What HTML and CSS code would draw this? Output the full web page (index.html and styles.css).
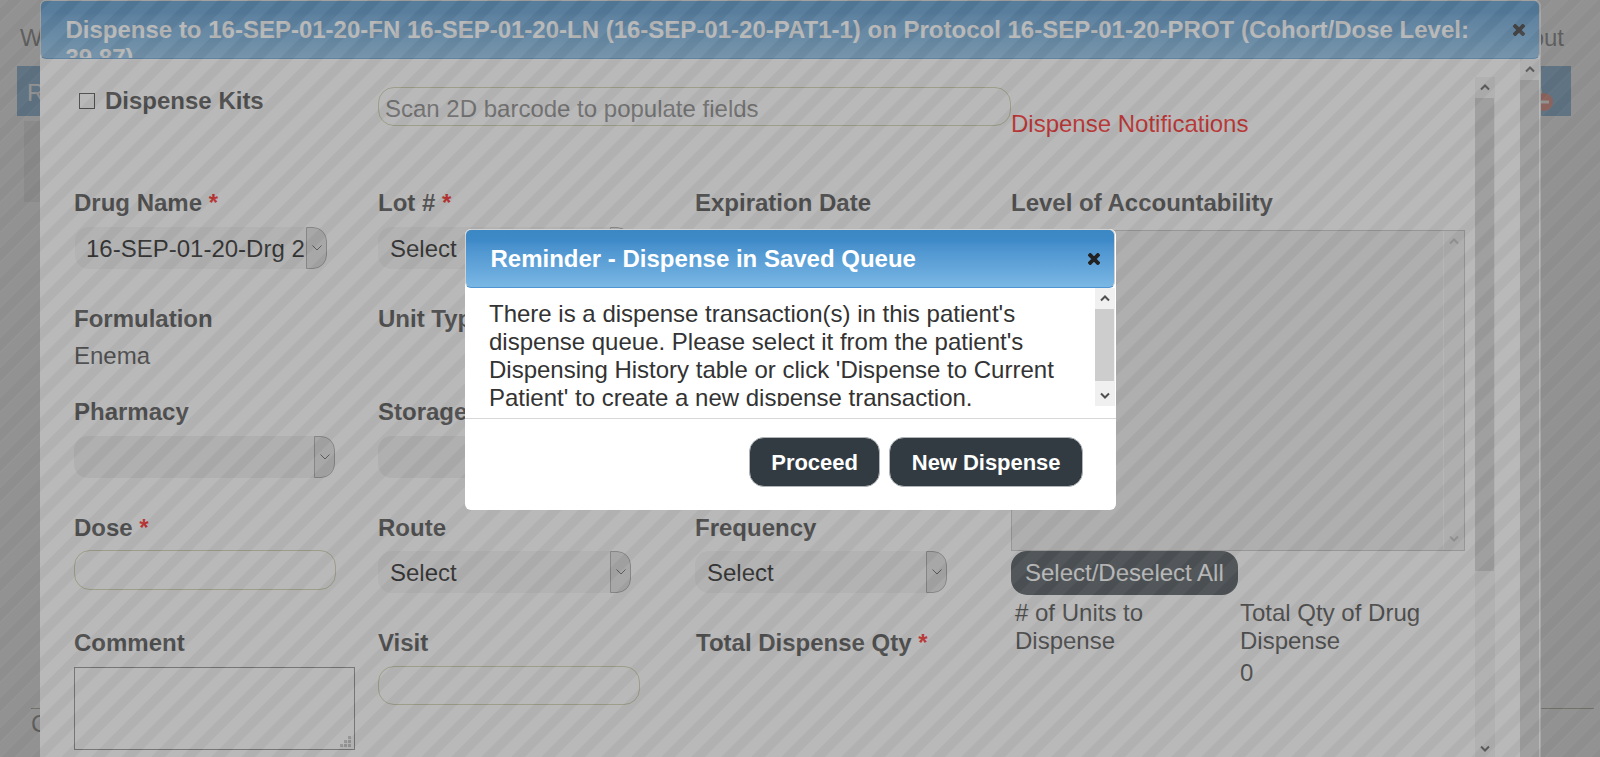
FILE: index.html
```html
<!DOCTYPE html>
<html lang="en">
<head>
<meta charset="utf-8">
<title>Dispense</title>
<link rel="stylesheet" href="styles.css">
</head>
<body>
<svg class="defs" width="0" height="0">
  <symbol id="up" viewBox="0 0 10 8"><path d="M1 6.5 5 2.5 9 6.5" fill="none" stroke="currentColor" stroke-width="2"/></symbol>
  <symbol id="down" viewBox="0 0 10 8"><path d="M1 1.5 5 5.5 9 1.5" fill="none" stroke="currentColor" stroke-width="2"/></symbol>
  <symbol id="caret" viewBox="0 0 10 6"><path d="M.5 .5 5 5 9.500 .5" fill="none" stroke="currentColor" stroke-width="1"/></symbol>
  <symbol id="close" viewBox="0 0 12 12"><path d="M2.200 2.200 9.800 9.800M9.800 2.200 2.200 9.800" fill="none" stroke="currentColor" stroke-width="3.900" stroke-linecap="square"/></symbol>
</svg>

<div class="page">
  <div class="page-top"><span>W</span><span>Logout</span></div>
  <div class="nav"><span>R</span>
    <svg class="nav-icon" width="34" height="40" viewBox="0 0 34 40"><path d="M15 2h4l4 24H8z" fill="#eee"/><circle cx="24" cy="29" r="9" fill="#e0452f"/><path d="M19 29h10" stroke="#fff" stroke-width="3"/></svg>
  </div>
  <div class="panel"></div>
  <div class="footer">C</div>
</div>
<div class="overlay overlay-back"></div>

<div class="dialog">
  <div class="titlebar"><h1 class="title">Dispense to 16-SEP-01-20-FN 16-SEP-01-20-LN (16-SEP-01-20-PAT1-1) on Protocol 16-SEP-01-20-PROT (Cohort/Dose Level: 39.87)</h1><svg class="close" width="12" height="12"><use href="#close"/></svg></div>
  <div class="dialog-body">
    <div class="form">
      <div class="fields">
        <div class="kits"><i class="checkbox"></i><b>Dispense Kits</b></div>
        <div class="scan">Scan 2D barcode to populate fields</div>

        <div class="cell"><b>Drug Name <em>*</em></b><div class="select nudge"><span>16-SEP-01-20-Drg 2</span><i><svg width="10" height="6"><use href="#caret"/></svg></i></div></div>
        <div class="cell"><b>Lot # <em>*</em></b><div class="select"><span>Select</span><i><svg width="10" height="6"><use href="#caret"/></svg></i></div></div>
        <div class="cell"><b>Expiration Date</b></div>

        <div class="cell tight"><b>Formulation</b><span>Enema</span></div>
        <div class="cell"><b>Unit Type</b></div>
        <div class="cell"></div>

        <div class="cell"><b>Pharmacy</b><div class="select wide"><span></span><i><svg width="10" height="6"><use href="#caret"/></svg></i></div></div>
        <div class="cell"><b>Storage</b><div class="select disabled"><span></span><i><svg width="10" height="6"><use href="#caret"/></svg></i></div></div>
        <div class="cell"></div>

        <div class="cell dose"><b>Dose <em>*</em></b><div class="input"></div></div>
        <div class="cell route"><b>Route</b><div class="select"><span>Select</span><i><svg width="10" height="6"><use href="#caret"/></svg></i></div></div>
        <div class="cell route"><b>Frequency</b><div class="select narrow"><span>Select</span><i><svg width="10" height="6"><use href="#caret"/></svg></i></div></div>

        <div class="cell"><b>Comment</b><div class="textarea"><svg width="11" height="11" viewBox="0 0 11 11"><path d="M8 0h3v3H8zM4 4h3v3H4zM8 4h3v3H8zM0 8h3v3H0zM4 8h3v3H4zM8 8h3v3H8z" fill="#bbb"/></svg></div></div>
        <div class="cell visit"><b>Visit</b><div class="input"></div></div>
        <div class="cell qty"><b>Total Dispense Qty <em>*</em></b></div>
      </div>
      <div class="side">
        <div class="notice">Dispense Notifications</div>
        <b>Level of Accountability</b>
        <div class="listbox"><div class="list-scroll"><svg width="10" height="8"><use href="#up"/></svg><svg width="10" height="8"><use href="#down"/></svg></div></div>
        <div class="select-all">Select/Deselect All</div>
        <div class="totals"><span># of Units to Dispense</span><span>Total Qty of Drug Dispense</span><span></span><span>0</span></div>
      </div>
    </div>
    <div class="scrollbar inner"><svg width="10" height="8"><use href="#up"/></svg><div class="thumb"></div><svg width="10" height="8"><use href="#down"/></svg></div>
    <div class="scrollbar outer"><svg width="10" height="8"><use href="#up"/></svg><div class="thumb"></div></div>
  </div>
</div>
<div class="overlay"></div>

<div class="reminder">
  <div class="titlebar"><h2 class="title">Reminder - Dispense in Saved Queue</h2><svg class="close" width="12" height="12"><use href="#close"/></svg></div>
  <div class="message">
    <p>There is a dispense transaction(s) in this patient's dispense queue. Please select it from the patient's Dispensing History table or click 'Dispense to Current Patient' to create a new dispense transaction.</p>
    <div class="scrollbar small"><svg width="10" height="8"><use href="#up"/></svg><div class="thumb"></div><svg width="10" height="8"><use href="#down"/></svg></div>
  </div>
  <div class="buttons"><div class="button">Proceed</div><div class="button">New Dispense</div></div>
</div>
</body>
</html>
```

FILE: styles.css
```css
* { box-sizing: border-box; }
body { margin: 0; width: 1600px; height: 757px; overflow: hidden; position: relative; background: #fff; color: #333; font: 24px/28px "Liberation Sans", Arial, sans-serif; }
.defs { position: absolute; }
svg { display: block; flex: none; }
b { font-weight: bold; }
em { font-style: normal; color: #f00; }

.page { height: 757px; padding: 24px 0 0; background: #fff; }
.page-top { display: flex; justify-content: space-between; padding: 0 36px 0 20px; height: 42px; }
.nav { width: 1554px; height: 50px; margin-left: 17px; padding: 13px 15px 0 10px; display: flex; justify-content: space-between; background: #3a84c4; color: #fff; }
.nav-icon { margin: -6px 2px 0 0; }
.panel { width: 1480px; height: 81px; margin: 5px 0 0 24px; background: #e2e2e2; }
.footer { width: 1563px; margin: 506px 0 0 31px; padding-top: 1px; border-top: 1px solid #808060; }

.overlay { position: absolute; inset: 0; opacity: .5; background: repeating-linear-gradient(135deg, #737373 0 5.3px, #636363 6.3px 15px, #737373 16px 21.213px); }
.overlay-back { background: repeating-linear-gradient(135deg, #636363 0 4.500px, #737373 5.500px 16px, #636363 17px 21.213px); }

.titlebar { display: flex; justify-content: space-between; height: 58px; padding: 15px 14px 0 24.500px; border: 1px solid #4f95d2; border-color: #d0d0d0 #d0d0d0 #4f95d2; border-radius: 6px; background: linear-gradient(#3b88c4 0, #3f8ac8 20%, #4a92ce 28%, #7ab7e4 100%); color: #fff; overflow: hidden; }
.title { margin: 0; font-size: 24px; line-height: 28px; font-weight: bold; white-space: normal; }
.close { color: #222; margin-top: 8px; }

.dialog { position: absolute; left: 40px; top: 0; width: 1501px; height: 757px; background: #fff; border-right: 1px solid #ddd; border-radius: 6px 6px 0 0; overflow: hidden; }
.dialog .titlebar { height: 59px; width: 1500px; padding-right: 14px; }
.dialog .title { width: 1420px; }
.dialog-body { display: flex; height: 698px; }
.form { width: 1435px; display: flex; padding: 28px 0 0 34px; }
.fields { width: 937px; display: grid; grid-template-columns: 304px 317px 316px; grid-template-rows: 102px 116px 93px 116px 115px 130px; }
.kits { display: flex; gap: 10px; padding-left: 5px; }
.checkbox { width: 16px; height: 16px; margin-top: 6px; border: 1px solid #333; }
.scan { grid-column: 2 / 4; width: 633px; height: 39px; padding: 7px 6px 0; border: 1px solid #c8c8a0; border-radius: 16px; color: #757575; line-height: 28px; }
.cell { display: flex; flex-direction: column; gap: 10px; }
.cell.tight, .cell.route { gap: 9px; }
.cell.dose { gap: 8px; }
.cell.visit { gap: 9px; }
.cell.qty { padding-left: 1px; }
.select { width: 253px; height: 42px; display: flex; border-radius: 14px; overflow: hidden; background: #f3f3f3; color: #000; }
.select.nudge { width: 252px; margin-left: 1px; }
.select.nudge span { padding-left: 11px; }
.select.narrow { width: 252px; }
.select.wide { width: 261px; }
.select.wide, .select.disabled { background: #ededed; }
.select span { flex: 1; min-width: 0; padding: 8px 0 0 12px; overflow: hidden; white-space: nowrap; }
.select i { width: 21px; border: 1px solid #999; border-radius: 0 14px 14px 0; background: #dcdcdc; display: flex; align-items: center; justify-content: center; color: #444; }
.input { width: 262px; height: 40px; border: 1px solid #c8c8a0; border-radius: 16px; }
.visit .input { height: 39px; }
.textarea { width: 281px; height: 83px; border: 1px solid #7a7a7a; display: flex; align-items: flex-end; justify-content: flex-end; padding: 2px 3px; }

.side { width: 454px; padding-top: 23px; display: flex; flex-direction: column; }
.notice { height: 79px; color: #f00; }
.listbox { height: 321px; margin-top: 13px; border: 1px solid #bbb; background: #ebebeb; display: flex; justify-content: flex-end; }
.list-scroll { width: 21px; border-left: 1px solid #fafafa; display: flex; flex-direction: column; align-items: center; justify-content: space-between; padding: 6px 1px 7px 0; color: #bbb; }
.select-all { width: 227px; height: 44px; padding: 8px 0 0 14px; border-radius: 16px; background: #323b42; color: #fff; white-space: nowrap; }
.totals { padding: 4px 0 0 4px; display: grid; grid-template-columns: 160px 220px; column-gap: 65px; row-gap: 4px; }

.scrollbar { display: flex; flex-direction: column; align-items: center; background: #f0f0f0; color: #505050; }
.thumb { width: 100%; background: #cdcdcd; }
.scrollbar.inner { width: 20px; margin-top: 18px; height: 680px; padding: 6px 1px 0 0; }
.inner .thumb { height: 473px; margin: 7px 0 174px; }
.scrollbar.outer { width: 19px; margin-left: 25px; padding-top: 6px; }
.outer .thumb { flex: 1; margin-top: 7px; }

.reminder { position: absolute; left: 465px; top: 229px; width: 651px; height: 281px; border-radius: 6px; background: #fff; overflow: hidden; }
.reminder .titlebar { width: 650px; height: 59px; border-color: #d0d0d0 #d0d0d0 #4f95d2; }
.message { height: 118px; display: flex; overflow: hidden; }
.message p { margin: 0; width: 630px; padding: 12px 30px 0 24px; }
.scrollbar.small { width: 20px; padding: 6px 1px 0 0; }
.small .thumb { height: 72px; margin: 7px 0 11px; }
.buttons { margin-top: 12px; height: 92px; border-top: 1px solid #d8d8d8; display: flex; justify-content: flex-end; gap: 9px; padding: 18px 33px 0 0; }
.button { height: 50px; padding: 12px 21.500px 0; border: 1px solid #b0b4b6; border-radius: 15px; background: #323b42; color: #fff; font-size: 22px; line-height: 26px; letter-spacing: -.04px; font-weight: bold; }
```
